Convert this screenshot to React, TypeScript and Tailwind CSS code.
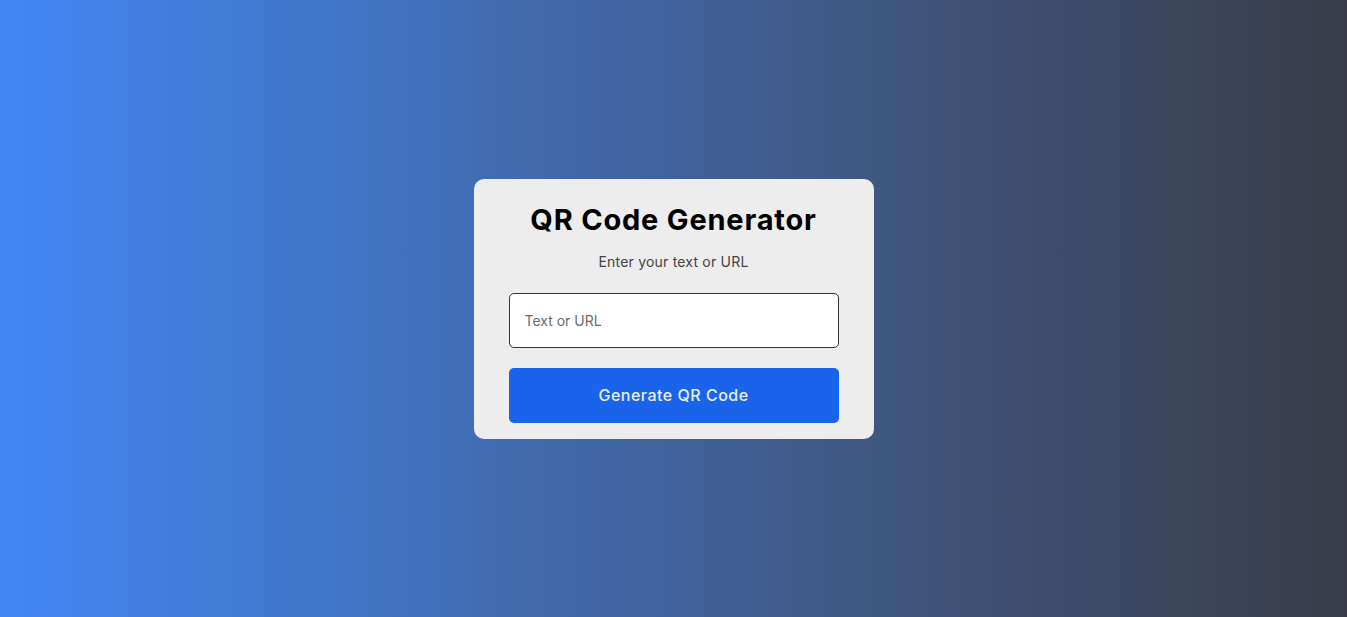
import { useState } from 'react';

export default function App() {
  const [text, setText] = useState('');

  return (
    <div className="min-h-screen w-full flex items-center justify-center bg-gradient-to-r from-[#4188f4] to-[#393c48] font-['Inter','Noto_Sans',sans-serif]">
      <div className="w-[400px] bg-[#ededed] rounded-[10px] px-[35px] pt-[21px] pb-[16px] flex flex-col items-center">
        <h1 className="text-[29px] leading-[40px] font-bold text-black tracking-[0.8px]">QR Code Generator</h1>
        <p className="mt-[12px] text-[14px] leading-[20px] text-[#444] tracking-[0.2px]">Enter your text or URL</p>
        <input
          type="text"
          value={text}
          onChange={(e) => setText(e.target.value)}
          placeholder="Text or URL"
          className="mt-[21px] w-full h-[55px] px-[15px] bg-white border border-[#333] rounded-[5px] text-[14px] text-[#333] placeholder:text-[#6b6b6b] outline-none"
        />
        <button className="mt-[20px] w-full h-[55px] rounded-[5px] bg-[#1a64eb] text-[#e8eefc] text-[16px] font-medium tracking-[0.5px]">
          Generate QR Code
        </button>
      </div>
    </div>
  );
}
